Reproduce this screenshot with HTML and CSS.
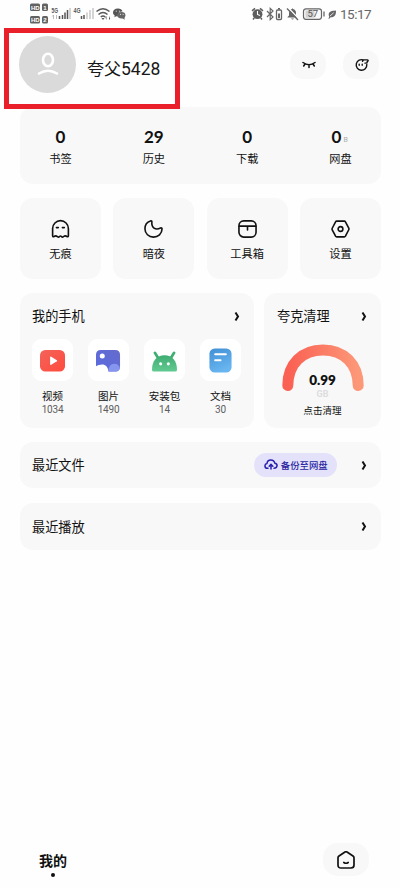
FILE: index.html
```html
<!DOCTYPE html>
<html lang="zh-CN">
<head>
<meta charset="utf-8">
<title>我的</title>
<link rel="stylesheet" href="styles.css">
</head>
<body>
<div class="screen">
  <header class="status">
    <svg class="status-left" width="98" height="22" viewBox="0 0 98 22">
      <g fill="#626262"><rect x="1" y="0.500" width="10" height="7.500" rx="1.500"/><rect x="13" y="0.500" width="6" height="7.500" rx="1.500"/><rect x="1" y="13" width="10" height="7.500" rx="1.500"/><rect x="13" y="13" width="6" height="7.500" rx="1.500"/></g>
      <g class="badge-text"><text x="2" y="6.500">HD</text><text x="14.300" y="6.500">1</text><text x="2" y="19">HD</text><text x="14.300" y="19">2</text></g>
      <g class="net-text"><text x="22.500" y="9.500" textLength="6.500" lengthAdjust="spacingAndGlyphs">5G</text><text x="44.500" y="9.500" textLength="7" lengthAdjust="spacingAndGlyphs">4G</text></g>
      <path d="M24.500 12v4m-1.300-2.500 1.300-1.500M27.500 16v-4" stroke="#aaa" fill="none" stroke-width=".8"/>
      <path d="M30.500 16v-3M33.500 16v-4M36 16V9.500M38.500 16V7" stroke="#555" stroke-width="1.500"/>
      <path d="M41 16V5M58 16V9.500M61 16V7M64 16V5" stroke="#c4c4c4" stroke-width="1.400"/>
      <path d="M52.500 16v-3M55 16v-4" stroke="#555" stroke-width="1.500"/>
      <g fill="none" stroke="#595959" stroke-width="1.500"><path d="M67.500 8.500q6.500-5.500 13 0M69.500 11.500q4.500-4 9 0M71.800 14q2.200-2 4.400 0"/></g>
      <path d="m72.500 15 1.500 2 1.500-2zM77.500 17v-4l-1.200 1.300M80 13v4l1.200-1.300" fill="#595959"/>
      <path d="M89 5.500c-3.300 0-5 1.800-5 4 0 1.300.7 2.200 1.800 3l-.5 1.800 2-1.100 1.700.2c-.8-3.600 2-5.100 4.500-5-.4-1.900-2.200-2.900-4.500-2.900z" fill="#555"/>
      <ellipse cx="92.500" cy="12.200" rx="3.900" ry="3.200" fill="#666"/><path d="m93 15 2.700 1.700-.3-2.500z" fill="#666"/>
      <path d="M86.800 8.200h.9M89.900 8.200h.9M91 11.400h.8M93.700 11.400h.8" stroke="#fff" stroke-width="1"/>
    </svg>
    <div class="status-right">
      <svg width="88" height="16" viewBox="0 0 88 16">
        <circle cx="6.500" cy="8.200" r="4.900" fill="#5d5d5d"/><path d="m1 4.800 3-2.500M12 4.800 9 2.300M3.200 12l-1.200 1.500M9.800 12l1.200 1.500" stroke="#5d5d5d" stroke-width="1.500"/><path d="M6.500 5v3.500l2.500 1" fill="none" stroke="#fff" stroke-width="1.100"/>
        <path d="m16 5 6 6-2.800 2.700V2.300L22 5l-6 6" fill="none" stroke="#666" stroke-width="1.200"/>
        <rect x="25.500" y="4" width="5" height="9.500" rx="1" fill="none" stroke="#666" stroke-width="1.300"/><path d="M27 2.700h2" stroke="#666" stroke-width="1.500"/><path d="M27 7.500h2v4.500h-2z" fill="#666"/>
        <path d="M36.500 11.500V11l1.500-1.500V7c0-2 1-3.500 3-4l.5-1 .5 1c2 .5 3 2 3 4v2.500l1.500 2zM40 12.500h3q-1.500 2-3 0" fill="#666"/><path d="M37 1.500 47.500 12.500" stroke="#fff" stroke-width="1.300"/><path d="m36 2.500 11 11.500" stroke="#666" stroke-width="1.300"/>
        <rect x="52.500" y="2.800" width="18" height="10.500" rx="2.500" fill="#fafafa" stroke="#666" stroke-width="1.200"/><rect x="54.500" y="4.500" width="9" height="7.200" fill="#d2d2d2"/><path d="M73 5.500v5" stroke="#666" stroke-width="1.300"/><text class="battery-text" x="56.500" y="11.200">57</text>
        <path d="M85 4.500c-4 .3-7.500 1-7.300 4.300 0 .9.300 1.500.6 1.900l-1 2 1.300-.2 1-1.200c4 .2 5.600-2.400 5.400-6.800z" fill="#666"/><path d="m79 10 3.700-3.300" stroke="#fff" stroke-width=".8"/>
      </svg>
      <span class="time">15:17</span>
    </div>
  </header>

  <section class="profile">
    <div class="avatar"><svg width="24" height="26" viewBox="0 0 24 26" fill="none" stroke="#fff"><ellipse cx="12" cy="8" rx="5" ry="6.200" stroke-width="2.600"/><path d="M3 21.500q9-5.500 18 0" stroke-width="2.600" stroke-linecap="round"/></svg></div>
    <div class="username">夸父<span>5428</span></div>
    <div class="round-button"><svg width="14" height="8" viewBox="0 0 14 8" fill="none" stroke="#111" stroke-width="1.500" stroke-linecap="round"><path d="M1 1.500q6 4.500 12 0M3 3 1.700 5M7 4v2.500M11 3l1.300 2"/></svg></div>
    <div class="round-button last"><svg width="14" height="14" viewBox="0 0 14 14" fill="none" stroke="#111" stroke-width="1.400" stroke-linecap="round" stroke-linejoin="round"><path d="M8.500 2A5.300 5.300 0 1 0 11.800 6.500M7.500 3.200 8.500 1.900h4c.9 0 .8 1.500-.2 1.600l-.3 1.400-2 .2"/><path d="M4.200 6.300v.9M7.200 6.300v.9"/></svg></div>
    <div class="highlight"></div>
  </section>

  <section class="card stats">
    <div class="stat"><b>0</b><span>书签</span></div>
    <div class="stat"><b>29</b><span>历史</span></div>
    <div class="stat"><b>0</b><span>下载</span></div>
    <div class="stat"><b>0<i class="unit">B</i></b><span>网盘</span></div>
  </section>

  <section class="tools">
    <div class="card tool"><svg class="line-icon" viewBox="0 0 20 20"><path d="M1.700 17.200V9.500a8.300 8.300 0 0 1 16.600 0v7.700c0 1-.8 1.200-1.500.7-1.300-1-2.400-1-3.500 0-1 .9-1.600.9-2.300 0-.7-.7-1.300-.7-2 0-.8.9-1.400.9-2.300 0-1.200-1-2.200-1-3.500 0-.8.500-1.500.3-1.500-.7z"/><path d="M5.700 8.500h2M12 8.500h2"/></svg><span>无痕</span></div>
    <div class="card tool"><svg class="line-icon" viewBox="0 0 20 20"><path d="M6.800 1.600C3 2.800 1 6 1 9.800c0 5 4 8.700 9 8.700 4.800 0 9-3.500 9-8.700 0-1-1-1.200-1.700-.8-5.300 2.800-9.700-.5-9-6.500 0-.8-.6-1.200-1.500-.9z"/></svg><span>暗夜</span></div>
    <div class="card tool"><svg class="line-icon" viewBox="0 0 20 20"><rect x="1" y="1.500" width="18" height="17" rx="5"/><path d="M1.500 7h17M10 7v4"/></svg><span>工具箱</span></div>
    <div class="card tool"><svg class="line-icon" viewBox="0 0 20 20"><path d="M6 1.700h8q.8 0 1.200.7l3.500 6.800q.4.800 0 1.600l-3.500 6.800q-.4.700-1.200.7H6q-.8 0-1.200-.7l-3.500-6.800q-.4-.8 0-1.600l3.500-6.800q.4-.7 1.200-.7z"/><circle cx="10" cy="10" r="2.500"/></svg><span>设置</span></div>
  </section>

  <section class="storage">
    <div class="card phone">
      <div class="card-head"><span>我的手机</span><svg class="chevron" viewBox="0 0 6 10"><path d="m1.500 1 2.500 4-2.500 4"/></svg></div>
      <div class="files">
        <div class="file"><div class="file-icon"><svg width="26" height="26" viewBox="0 0 26 26"><defs><linearGradient id="red" x2="1" y2="1"><stop stop-color="#f36359"/><stop offset="1" stop-color="#ff4b3e"/></linearGradient></defs><rect x="0" y="2" width="26" height="22.500" rx="5.500" fill="url(#red)"/><path d="M10.500 9.500v7.500q.3.900 1.200.4l5.800-3.500q.8-.6 0-1.200l-5.800-3.600q-.9-.5-1.200.4z" fill="#fff"/></svg></div><span>视频</span><small>1034</small></div>
        <div class="file"><div class="file-icon"><svg width="26" height="26" viewBox="0 0 26 26"><defs><linearGradient id="blue" x1="1" x2="0" y2="1"><stop stop-color="#656bcc"/><stop offset="1" stop-color="#596be0"/></linearGradient></defs><path d="M5 2h15q5 0 5 5v12.500q0 5-5 5h-7c-.5-5-3.300-7.300-6.500-7.300-2.700 0-4.500.8-6.500 1.800V7q0-5 5-5z" fill="url(#blue)"/><circle cx="6.500" cy="8.300" r="2.600" fill="#fff"/><path d="M13 24.500q0-8 6-8 4.500 0 5.800 4.500-.8 3.500-5 3.500z" fill="#8695ed"/></svg></div><span>图片</span><small>1490</small></div>
        <div class="file"><div class="file-icon"><svg width="26" height="26" viewBox="0 0 26 26"><defs><linearGradient id="green" x2="0" y2="1"><stop stop-color="#3eac72"/><stop offset="1" stop-color="#62ca91"/></linearGradient></defs><path d="m3 5 4 6.500M23 5l-4 6.500" stroke="#3eae73" stroke-width="2.800" stroke-linecap="round"/><path d="M0 22.500c0-9 5-15 13-15s13 6 13 15q0 2-2 2H2q-2 0-2-2z" fill="url(#green)"/><circle cx="9" cy="16.500" r="1.600" fill="#fff"/><circle cx="17" cy="16.500" r="1.600" fill="#fff"/></svg></div><span>安装包</span><small>14</small></div>
        <div class="file"><div class="file-icon"><svg width="26" height="26" viewBox="0 0 26 26"><defs><linearGradient id="sky" x2=".4" y2="1"><stop stop-color="#418fd5"/><stop offset="1" stop-color="#68b5f0"/></linearGradient></defs><rect x="1.500" y=".5" width="23" height="25" rx="5.500" fill="url(#sky)"/><path d="M7.500 6.500h11M7.500 12.800h5.500" stroke="#fff" stroke-width="2.200" stroke-linecap="round"/></svg></div><span>文档</span><small>30</small></div>
      </div>
    </div>
    <div class="card clean">
      <div class="card-head"><span>夸克清理</span><svg class="chevron" viewBox="0 0 6 10"><path d="m1.500 1 2.500 4-2.500 4"/></svg></div>
      <svg class="gauge" width="82" height="48" viewBox="0 0 82 48"><defs><linearGradient id="arc" x2="1" y2="0"><stop stop-color="#fa6053"/><stop offset="1" stop-color="#fc9877"/></linearGradient></defs><path d="M5.800 41.500C6 20 20 6 41 6s35 14 35.200 35.500" fill="none" stroke="url(#arc)" stroke-width="11" stroke-linecap="round"/></svg>
      <b class="amount">0.99</b><span class="gb">GB</span><span class="clean-label">点击清理</span>
    </div>
  </section>

  <section class="card row files-row"><span>最近文件</span><div class="backup"><svg width="14" height="11" viewBox="0 0 14 11" fill="none" stroke="#291fb0" stroke-width="1.500" stroke-linecap="round" stroke-linejoin="round"><path d="M4 9.300H3.500C.3 9.300.1 5 3 4.500 3.500-.3 10 0 10.800 4.200c3.400.6 2.700 5.100-.8 5.100M7 10V5.500M5.200 7.200 7 5.400l1.800 1.800"/></svg><span>备份至网盘</span></div><svg class="chevron" viewBox="0 0 6 10"><path d="m1.500 1 2.500 4-2.500 4"/></svg></section>
  <section class="card row play-row"><span>最近播放</span><svg class="chevron" viewBox="0 0 6 10"><path d="m1.500 1 2.500 4-2.500 4"/></svg></section>

  <nav class="bottom">
    <div class="mine"><span>我的</span><i class="dot"></i></div>
    <div class="home"><svg width="18" height="18" viewBox="0 0 18 18" fill="none" stroke="#111" stroke-width="1.700" stroke-linecap="round" stroke-linejoin="round"><path d="M1 6.800q0-1.100 1-1.800l6-4q1-.6 2 0l6 4q1 .7 1 1.800V14q0 3-3 3H4q-3 0-3-3z"/><path d="M6.800 11.500q2.200 1.500 4.400 0"/></svg></div>
  </nav>
</div>
</body>
</html>
```
FILE: styles.css
```css
* { box-sizing: border-box; }
body { margin: 0; background: #fefefe; color: #111; font-family: "Noto Sans CJK SC", sans-serif; }
svg { display: block; flex: none; }
.screen { width: 400px; height: 888px; padding: 0 19px 0 20px; display: flex; flex-direction: column; overflow: hidden; }
.status { height: 28px; display: flex; justify-content: space-between; padding: 3px 11px 0 9px; }
.status-right { display: flex; height: 22px; align-items: center; }
.time { font: 13.500px/22px Roboto, sans-serif; color: #666; width: 30px; margin-left: 1px; letter-spacing: -.5px; white-space: nowrap; }
.badge-text { font: bold 6px "Liberation Sans", sans-serif; fill: #fff; }
.net-text { font: bold 6.500px "Liberation Sans", sans-serif; fill: #555; }
.battery-text { font: 9.500px Roboto, sans-serif; fill: #555; }
.profile { height: 79px; position: relative; display: flex; align-items: flex-start; padding-top: 8px; }
.avatar { width: 57px; height: 57px; margin-left: -1px; border-radius: 50%; background: #dadada; display: flex; align-items: center; justify-content: center; }
.username { width: 203px; margin-left: 11px; padding-top: 20px; font-size: 17px; line-height: 24px; color: #171717; }
.username span { font-family: Roboto, sans-serif; font-size: 17.500px; }
.round-button { width: 36px; height: 29px; margin-top: 14px; border-radius: 13px; background: #f8f8f8; display: flex; align-items: center; justify-content: center; }
.round-button:not(.last) { padding-left: 2px; }
.round-button.last { margin-left: 17px; padding-left: 1px; }
.highlight { position: absolute; left: -16px; top: 0; width: 176px; height: 81px; border: 5px solid #e9202a; }
.card { background: #f8f8f8; border-radius: 13px; }
.stats, .tools { display: grid; grid-template-columns: repeat(4, 81px); justify-content: space-between; }
.stats { height: 77px; padding-top: 18px; }
.stat { display: flex; flex-direction: column; align-items: center; font-size: 11.200px; line-height: 16px; }
.stat b { font: bold 17px/24px Lato, sans-serif; position: relative; }
.stat span { margin-top: 1px; }
.unit { position: absolute; left: 12px; top: 3px; font: 7px/24px Roboto, sans-serif; color: #aaa; }
.stats .stat:last-child b { margin-left: -8px; }
.tools { margin-top: 14px; }
.tool { height: 81px; padding-top: 21px; display: flex; flex-direction: column; align-items: center; font-size: 11.200px; line-height: 16px; }
.tool span { margin-top: 6px; }
.line-icon { width: 19px; height: 20px; fill: none; stroke: #111; stroke-width: 1.700; stroke-linecap: round; stroke-linejoin: round; }
.storage { margin-top: 14px; display: flex; justify-content: space-between; }
.phone { width: 234px; height: 135px; }
.clean { width: 117px; height: 135px; display: flex; flex-direction: column; align-items: center; }
.card-head { width: 100%; height: 46px; padding: 0 14px 0 12px; display: flex; align-items: center; justify-content: space-between; font-size: 13.200px; line-height: 20px; }
.clean .card-head { padding-left: 13px; }
.chevron { width: 6px; height: 11px; fill: none; stroke: #111; stroke-width: 2; }
.files { display: flex; justify-content: space-between; padding: 0 13px 0 12px; }
.file { width: 41px; display: flex; flex-direction: column; align-items: center; font-size: 10.500px; line-height: 14px; white-space: nowrap; }
.file-icon { width: 41px; height: 42px; border-radius: 9px; background: #fff; display: flex; align-items: center; justify-content: center; margin-bottom: 8px; }
.file-icon svg { width: 25px; height: 25px; }
.file small { font: 10px/13px Roboto, sans-serif; color: #5d5d5d; letter-spacing: -.2px; }
.gauge { margin-top: 5px; }
.amount { margin-top: -21px; font: 800 13.500px/18px Lato, sans-serif; }
.gb { font: bold 9px/10px Roboto, sans-serif; color: #ddd; }
.clean-label { margin-top: 4px; font-size: 9.600px; line-height: 14px; }
.row { display: flex; align-items: center; padding: 0 14px 0 12px; font-size: 13.200px; line-height: 20px; }
.row .chevron { margin-left: auto; }
.files-row { height: 46px; margin-top: 14px; }
.play-row { height: 47px; margin-top: 15px; }
.backup { width: 83px; height: 24px; margin-left: 169px; margin-top: -1px; border-radius: 12px; background: #e4e2fb; display: flex; align-items: center; padding-left: 10px; gap: 3px; font-size: 9.400px; line-height: 14px; color: #291fa0; font-weight: 500; white-space: nowrap; }
.bottom { margin-top: auto; height: 45px; display: flex; justify-content: space-between; padding: 0 12px 0 19px; }
.mine { display: flex; flex-direction: column; align-items: center; padding-top: 7px; font-size: 14px; line-height: 20px; font-weight: 700; }
.dot { width: 4px; height: 4px; border-radius: 50%; background: #111; margin-top: 3px; }
.home { width: 46px; height: 33px; border-radius: 15px; background: #f8f8f8; display: flex; align-items: center; justify-content: center; }
```
